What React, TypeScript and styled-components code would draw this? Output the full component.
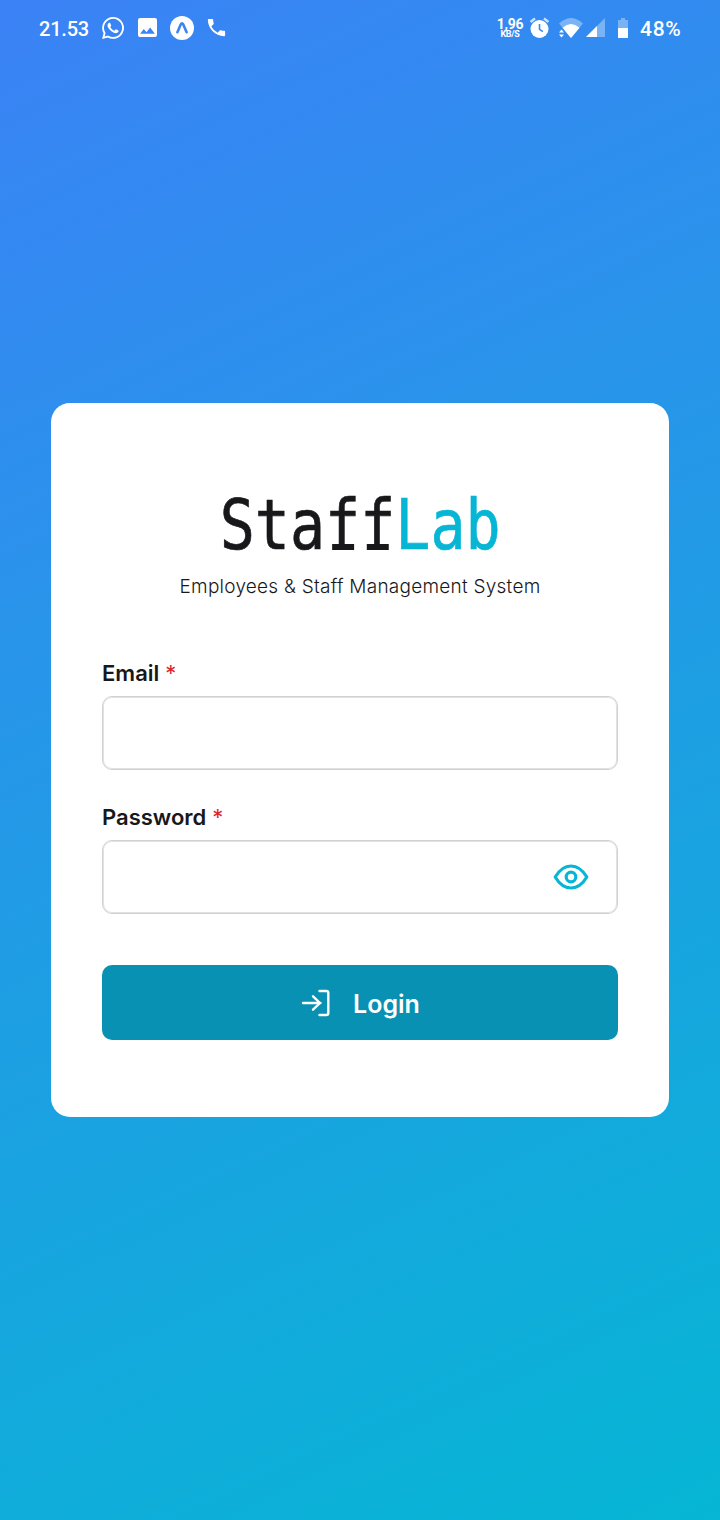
import React from 'react';
import styled, { createGlobalStyle } from 'styled-components';

const GlobalStyle = createGlobalStyle`
  *, *::before, *::after { box-sizing: border-box; }
  body { margin: 0; font-family: Inter, "Liberation Sans", sans-serif; color: #18181b; }
`;

const Screen = styled.main`
  display: flex;
  flex-direction: column;
  height: 1520px;
  width: 720px;
  overflow: hidden;
  background: linear-gradient(154.65deg, #3b82f6, #06b6d4);
`;

const StatusBar = styled.header`
  display: flex;
  justify-content: space-between;
  height: 56px;
  padding: 0 38px 0 39px;
  color: #fff;
`;

const StatusGroup = styled.div`
  display: flex;
  align-items: center;
  height: 55px;
  svg { display: block; flex: none; }
`;

const StatusText = styled.span<{ $width: number; $gap?: number; $spacing?: number; $size?: number }>`
  width: ${p => p.$width}px;
  margin: 3px 0 0 ${p => p.$gap ?? 0}px;
  font: 500 ${p => p.$size ?? 20}px/24px Roboto, sans-serif;
  letter-spacing: ${p => p.$spacing ?? 0}px;
  white-space: nowrap;
`;

const Speed = styled.div`
  display: flex;
  flex-direction: column;
  align-items: center;
  width: 26px;
  margin: 2px 6px 0 0;
  font: 700 14px/12px Roboto, sans-serif;
  letter-spacing: -0.3px;
  white-space: nowrap;
  small { font-size: 9px; line-height: 9px; }
`;

const StatusIcon = styled.svg<{ $gap: number }>`
  margin-left: ${p => p.$gap}px;
`;

const Card = styled.section`
  display: flex;
  flex-direction: column;
  width: 618px;
  height: 714px;
  margin: 347px auto 0;
  padding: 77px 51px;
  border-radius: 19px;
  background: #fff;
`;

const Brand = styled.h1`
  align-self: center;
  height: 90px;
  margin: 0;
  font: 400 69px/90px "DejaVu Sans Mono", monospace;
  white-space: nowrap;
  -webkit-text-stroke: 0.7px currentColor;
  transform: scaleX(0.845);
`;

const FootedLetter = styled.span`
  position: relative;
  &::after {
    content: '';
    position: absolute;
    left: 8px;
    bottom: 15px;
    width: 26px;
    height: 6px;
    background: currentColor;
  }
`;

const BrandAccent = styled.span`
  color: #06b6d4;
`;

const Tagline = styled.p`
  margin: 5px 0 0;
  text-align: center;
  font-size: 19px;
  line-height: 24px;
  font-weight: 300;
  letter-spacing: 0.25px;
  white-space: nowrap;
`;

const Form = styled.form`
  display: flex;
  flex-direction: column;
  margin-top: 59px;
`;

const Field = styled.div`
  display: flex;
  flex-direction: column;
  gap: 8px;
  & + & { margin-top: 32px; }
`;

const Label = styled.label`
  height: 30px;
  font-size: 22px;
  line-height: 30px;
  font-weight: 600;
`;

const Required = styled.span`
  margin-left: 0.5px;
  color: #dc2626;
  font-weight: 400;
`;

const InputShell = styled.div`
  display: flex;
  align-items: center;
  height: 74px;
  padding-right: 27px;
  border: 1px solid #d1d1d1;
  border-radius: 10px;
  box-shadow: inset 0 0 0 1px #e2e2e2;
`;

const Input = styled.input`
  flex: 1;
  min-width: 0;
  height: 100%;
  padding: 0 20px;
  border: 0;
  outline: 0;
  background: transparent;
  font: 400 22px Inter, sans-serif;
`;

const IconButton = styled.button`
  display: flex;
  padding: 0;
  border: 0;
  background: none;
  color: #06b6d4;
`;

const LoginButton = styled.button`
  display: flex;
  align-items: center;
  justify-content: center;
  gap: 22px;
  height: 75px;
  margin-top: 51px;
  padding: 2px 0 0 1px;
  border: 0;
  border-radius: 10px;
  background: #0891b2;
  color: #fff;
  font: 600 25px/30px Inter, sans-serif;
  svg { display: block; margin-top: -1px; }
`;

export default function App() {
  return (
    <>
      <GlobalStyle />
      <Screen>
        <StatusBar>
          <StatusGroup>
            <StatusText $width={50} $spacing={-0.2}>21.53</StatusText>
            <StatusIcon $gap={13} width="22" height="22" viewBox="0 0 24 24" fill="#fff">
              <path d="M17.47 14.38c-.3-.15-1.76-.87-2.03-.97-.27-.1-.47-.15-.67.15-.2.3-.77.97-.94 1.16-.17.2-.35.22-.65.08-.3-.15-1.26-.47-2.39-1.48-.88-.79-1.48-1.76-1.65-2.06-.17-.3-.02-.46.13-.6.13-.14.3-.35.45-.53.15-.17.2-.3.3-.5.1-.2.05-.37-.03-.52-.07-.15-.67-1.61-.91-2.21-.24-.58-.49-.5-.67-.51h-.57c-.2 0-.52.07-.8.37-.27.3-1.04 1.02-1.04 2.48s1.07 2.88 1.22 3.08c.15.2 2.1 3.2 5.08 4.49.7.3 1.26.49 1.7.63.71.23 1.36.19 1.87.12.57-.09 1.76-.72 2-1.42.25-.69.25-1.29.18-1.41-.08-.13-.28-.2-.58-.35M12.05 0A11.9 11.9 0 0 0 1.73 17.84L.06 24l6.3-1.65A11.9 11.9 0 1 0 12.05 0m0 21.79a9.9 9.9 0 0 1-5.03-1.38l-.36-.22-3.74.98 1-3.65-.24-.37a9.88 9.88 0 1 1 8.37 4.64" />
            </StatusIcon>
            <StatusIcon $gap={14} width="19" height="19" viewBox="0 0 18 18" fill="#fff">
              <path d="M18 16V2a2 2 0 0 0-2-2H2a2 2 0 0 0-2 2v14c0 1.1.9 2 2 2h14a2 2 0 0 0 2-2zM5.5 10.5 8 13.51 11.5 9l4.5 6H2z" />
            </StatusIcon>
            <StatusIcon $gap={13} width="24" height="24" viewBox="0 0 24 24">
              <circle cx="12" cy="12" r="12" fill="#fff" />
              <path d="M7.4 16.2 10.7 8.6Q12 6 13.3 8.6l3.3 7.6" fill="none" stroke="#3b84f4" strokeWidth="2.6" strokeLinecap="round" strokeLinejoin="round" />
            </StatusIcon>
            <StatusIcon $gap={11} width="23" height="23" viewBox="0 0 24 24" fill="#fff">
              <path d="M6.62 10.79c1.44 2.83 3.76 5.14 6.59 6.59l2.2-2.2c.27-.27.67-.36 1.02-.24 1.12.37 2.33.57 3.57.57.55 0 1 .45 1 1V20c0 .55-.45 1-1 1C10.61 21 3 13.39 3 4c0-.55.45-1 1-1h3.5c.55 0 1 .45 1 1 0 1.25.2 2.45.57 3.57.11.35.03.74-.25 1.02z" />
            </StatusIcon>
          </StatusGroup>
          <StatusGroup>
            <Speed>1,96<small>KB/S</small></Speed>
            <StatusIcon $gap={0} width="21" height="22" viewBox="0 0 20 22">
              <circle cx="10" cy="12" r="9" fill="#fff" />
              <path d="M10 7v5.3l3.4 2.3" fill="none" stroke="#368af1" strokeWidth="1.6" />
              <path d="M1 5 5.5 1.5M19 5l-4.5-3.5" stroke="#fff" strokeOpacity=".75" strokeWidth="2.4" />
            </StatusIcon>
            <StatusIcon $gap={9} width="24" height="20" viewBox="0 0 24 20" fill="#fff">
              <path d="M0 5.5Q12-5.5 24 5.5L12 20z" opacity=".35" />
              <path d="M3.5 9.7Q12 2.5 20.5 9.7L12 20z" />
              <path d="M0 14.5 2.5 11.5 5 14.5zM0 16.5h5l-2.5 3z" />
            </StatusIcon>
            <StatusIcon $gap={3} width="19" height="19" viewBox="0 0 19 19" fill="#fff">
              <path d="M19 0v19H0z" opacity=".35" />
              <path d="M11 8v11H0z" />
            </StatusIcon>
            <StatusIcon $gap={13} width="10" height="20" viewBox="0 0 10 20" fill="#fff">
              <path d="M3 0h4v2h3v8H0V2h3z" opacity=".35" />
              <path d="M0 10h10v10H0z" />
            </StatusIcon>
            <StatusText $width={42} $gap={12} $size={21} $spacing={0.7}>48%</StatusText>
          </StatusGroup>
        </StatusBar>
        <Card>
          <Brand>Sta<FootedLetter>f</FootedLetter><FootedLetter>f</FootedLetter><BrandAccent>Lab</BrandAccent></Brand>
          <Tagline>Employees &amp; Staff Management System</Tagline>
          <Form onSubmit={e => e.preventDefault()}>
            <Field>
              <Label htmlFor="email">Email <Required>*</Required></Label>
              <InputShell><Input id="email" type="email" /></InputShell>
            </Field>
            <Field>
              <Label htmlFor="password">Password <Required>*</Required></Label>
              <InputShell>
                <Input id="password" type="password" />
                <IconButton type="button" aria-label="Show password">
                  <svg width="38" height="38" viewBox="0 0 38 38" fill="none" stroke="currentColor" strokeWidth="3.2" strokeLinejoin="round">
                    <path d="M3.2 19Q9.7 8 19 8T34.8 19Q28.3 30 19 30T3.2 19Z" />
                    <circle cx="19" cy="19" r="4.8" />
                  </svg>
                </IconButton>
              </InputShell>
            </Field>
            <LoginButton type="submit">
              <svg width="30" height="30" viewBox="0 0 30 30" fill="none" stroke="#fff" strokeWidth="2.4" strokeLinecap="round" strokeLinejoin="round">
                <path d="M2 15h17.5M12 8.3l7 6.7-7 6.7M18.5 3h6.8q2 0 2 2v20q0 2-2 2h-6.8" />
              </svg>
              Login
            </LoginButton>
          </Form>
        </Card>
      </Screen>
    </>
  );
}
